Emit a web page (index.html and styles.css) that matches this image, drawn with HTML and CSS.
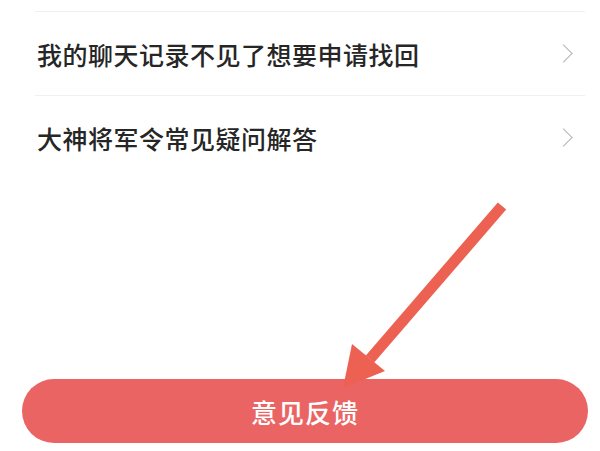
FILE: index.html
```html
<!DOCTYPE html>
<html lang="zh-CN">
<head>
  <meta charset="UTF-8" />
  <title>帮助与反馈</title>
  <link rel="stylesheet" href="styles.css">
</head>
<body>

  <div class="page">
    <!-- Question list -->
    <ul class="faq-list">
      <li class="faq-item">
        <span class="faq-title">我的聊天记录不见了想要申请找回</span>
        <span class="chevron"></span>
      </li>
      <li class="faq-item">
        <span class="faq-title">大神将军令常见疑问解答</span>
        <span class="chevron"></span>
      </li>
    </ul>

    <!-- Feedback button -->
    <button class="feedback-btn" type="button">意见反馈</button>

    <!-- Hint arrow pointing to the button -->
    <svg class="hint-arrow" width="600" height="451" viewBox="0 0 600 451">
      <line x1="502" y1="206" x2="370" y2="359" stroke="#ec6152" stroke-width="11" stroke-linecap="butt" />
      <polygon points="343,388 352,344 385,371" fill="#ec6152" />
    </svg>
  </div>

</body>
</html>
```

FILE: styles.css
```css
body {
  margin: 0;
  background: #fff;
  font-family: "Noto Sans CJK SC", "Noto Sans", sans-serif;
}

.page {
  position: relative;
  height: 451px;
  display: flex;
  flex-direction: column;
  overflow: hidden;
}

.faq-list {
  list-style: none;
  margin: 11px 15px 0 35px;
  padding: 0;
  border-top: 1px solid #f0f0f0;
}

.faq-item {
  display: flex;
  align-items: center;
  justify-content: space-between;
  height: 83px;
  padding-left: 2px;
}

.faq-item + .faq-item {
  border-top: 1px solid #f0f0f0;
}

.faq-title {
  font-size: 25px;
  font-weight: 500;
  color: #262626;
  letter-spacing: 0.5px;
}

.chevron {
  width: 12px;
  height: 12px;
  margin-right: 15px;
  border-top: 1.5px solid #b4b4b4;
  border-right: 1.5px solid #b4b4b4;
  transform: rotate(45deg);
}

.feedback-btn {
  margin: auto 12px 8px 22px;
  height: 64px;
  border: none;
  border-radius: 32px;
  background: #ea6464;
  color: #fff;
  font-family: inherit;
  font-size: 26px;
  font-weight: 500;
  letter-spacing: 1px;
  cursor: pointer;
}

.hint-arrow {
  position: absolute;
  left: 0;
  top: 0;
  pointer-events: none;
}
```
